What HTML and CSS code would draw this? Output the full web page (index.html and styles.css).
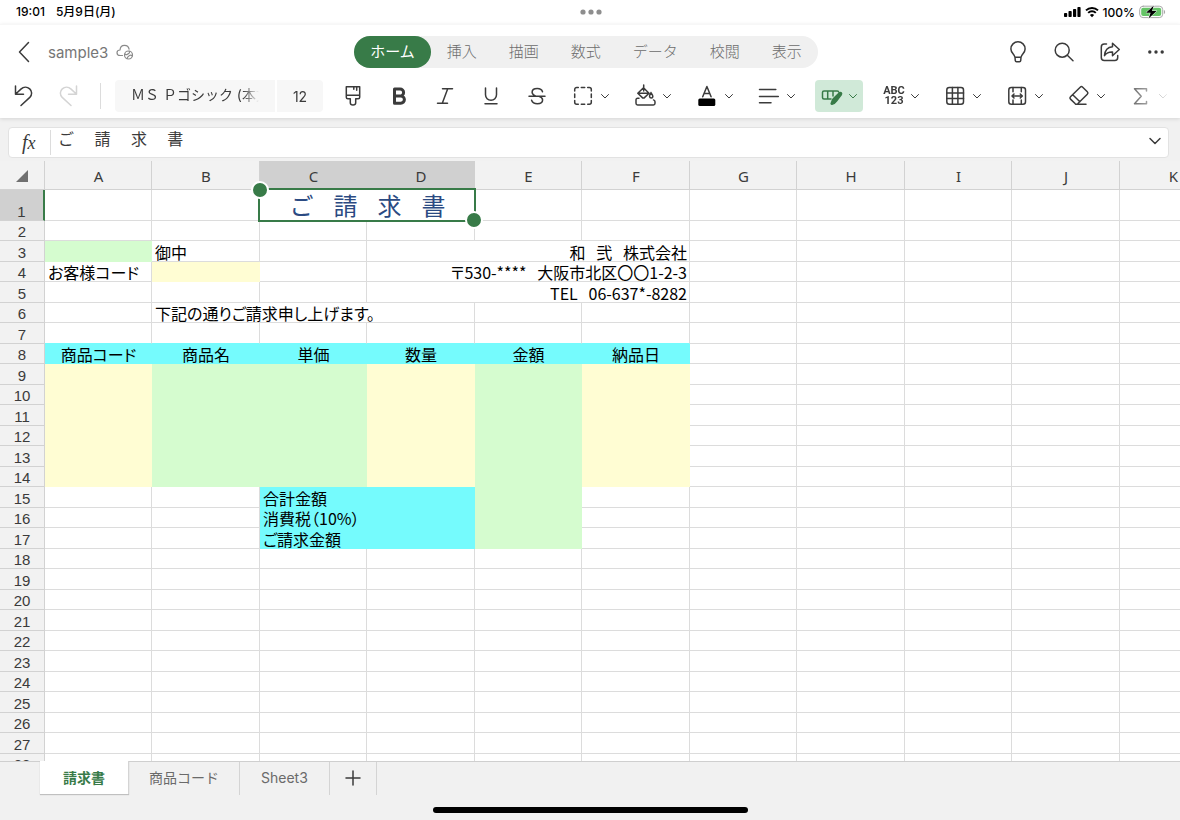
FILE: index.html
```html
<!DOCTYPE html>
<html lang="ja">
<head>
<meta charset="utf-8">
<meta name="viewport" content="width=device-width, initial-scale=1">
<title>sample3</title>
<link rel="stylesheet" href="styles.css">
</head>
<body>
<svg class="defs" aria-hidden="true">
  <symbol id="chev" viewBox="0 0 10 10"><path d="M1.5 3.5 5 7l3.5-3.5"/></symbol>
</svg>

<div class="status">
  <div class="status-left"><span>19:01</span><span>5月9日(月)</span></div>
  <svg class="status-dots" width="24" height="6" viewBox="0 0 24 6"><circle cx="4" cy="3" r="2.6"/><circle cx="12" cy="3" r="2.6"/><circle cx="20" cy="3" r="2.6"/></svg>
  <div class="status-right">
    <svg width="17" height="12" viewBox="0 0 17 12"><rect x="0" y="7" width="3.2" height="4" rx=".8"/><rect x="4.5" y="5" width="3.2" height="6" rx=".8"/><rect x="9" y="3" width="3.2" height="8" rx=".8"/><rect x="13.4" y="1" width="3.2" height="10" rx=".8"/></svg>
    <svg class="wifi" width="14" height="12" viewBox="0 0 14 12"><path d="M1 4.4a8.6 8.6 0 0 1 12 0M3.2 6.9a5.4 5.4 0 0 1 7.6 0"/><path class="solid" d="M7 11.2 4.9 9a3 3 0 0 1 4.2 0z"/></svg>
    <span>100%</span>
    <svg width="27" height="14" viewBox="0 0 27 14"><rect class="bat-line" x=".7" y="1.2" width="23" height="11.4" rx="3.4"/><path class="bat-cap" d="M24.9 5c1.6.3 1.6 3.6 0 4z"/><rect class="bat-fill" x="2.2" y="2.7" width="20" height="8.4" rx="2"/><path class="bolt" d="M14.8.6 7 7.700h4.600L9.600 13.400l8-7.300h-4.600z"/></svg>
  </div>
</div>

<header class="app">
  <div class="titlebar">
    <div class="doc">
      <button class="back" aria-label="戻る"><svg width="14" height="24" viewBox="0 0 14 24"><path d="M11.5 2.5 2.500 12l9 9.500"/></svg></button>
      <span class="doc-name">sample3</span>
      <svg class="cloud" width="18" height="18" viewBox="0 0 18 18"><path d="M6.500 12.500H4.200C2.300 12.500 1 11.300 1 9.700 1 8.100 2.300 7 4 7c.2-2.700 2-4.700 4.500-4.700 2.400 0 4.200 1.600 4.600 3.900"/><circle cx="12.500" cy="12" r="4"/><path d="M9.300 11.200c1.500 1.300 2-.2 3.200-.6s1.200-1.400.8-2.300M11.200 15.500c0-1.700 1.400-2 2.200-2.800s2.200-.3 2.800.2"/></svg>
    </div>
    <nav class="ribbon">
      <button class="rtab on">ホーム</button><button class="rtab">挿入</button><button class="rtab">描画</button><button class="rtab">数式</button><button class="rtab">データ</button><button class="rtab">校閲</button><button class="rtab">表示</button>
    </nav>
    <div class="actions">
      <button aria-label="ヒント"><svg width="24" height="24" viewBox="0 0 24 24"><path d="M9 17.300C8.500 14 4.900 12.800 4.900 8.900a7.100 7.100 0 0 1 14.200 0c0 3.900-3.600 5.100-4.100 8.400zM9 17.300l.3 3.400c.1.800.5 1.100 1.200 1.100h3c.7 0 1.100-.3 1.200-1.100l.3-3.400"/></svg></button>
      <button aria-label="検索"><svg width="24" height="24" viewBox="0 0 24 24"><circle cx="10.200" cy="10.200" r="7"/><path d="m15.300 15.300 5.700 5.500"/></svg></button>
      <button aria-label="共有"><svg width="24" height="24" viewBox="0 0 24 24"><path d="M8.500 4H6.300A3 3 0 0 0 3.300 7v10.500a3 3 0 0 0 3 3h10.400a3 3 0 0 0 3-3v-2"/><path d="M14.500 3.200 21.300 9.500l-6.800 6.200v-3.700c-3.600-.2-6 .9-8 3.600.4-5 3-8.500 8-8.900z"/></svg></button>
      <button aria-label="その他"><svg class="dots" width="24" height="24" viewBox="0 0 24 24"><circle cx="5.800" cy="12" r="1.700"/><circle cx="12" cy="12" r="1.700"/><circle cx="18.200" cy="12" r="1.700"/></svg></button>
    </div>
  </div>

  <div class="toolbar">
    <button class="tool" aria-label="元に戻す"><svg width="24" height="24" viewBox="0 0 24 24"><path d="M3.500 2v8.200h8M3.700 10l5.200-4.900c2.700-2.500 6.300-2.500 8.800-.2s2.600 6 .1 8.500L9 21.500"/></svg></button>
    <button class="tool off" aria-label="やり直し" disabled><svg width="24" height="24" viewBox="0 0 24 24"><path d="M18.500 2v8.200h-8M18.300 10l-5.200-4.900c-2.700-2.500-6.300-2.500-8.800-.2s-2.600 6-.1 8.500l8.800 8.100"/></svg></button>
    <span class="sep"></span>
    <div class="fontbox">
      <label class="field font-name"><input type="text" value="ＭＳ Ｐゴシック (本文)" aria-label="フォント"></label>
      <label class="field font-size"><input type="text" value="12" aria-label="フォント サイズ"></label>
    </div>
    <button class="tool" aria-label="書式のコピー"><svg width="24" height="24" viewBox="0 0 24 24"><path d="M5.300 2.700h13.400v10.600c0 1-.5 1.500-1.500 1.500h-2.500v4c0 3-5.400 3-5.400 0v-4H6.800c-1 0-1.500-.5-1.500-1.500zM5.300 11.200h13.400M12.800 2.700v2.500M15.700 2.700v3.600"/></svg></button>
    <button class="tool" aria-label="太字"><svg class="heavy" width="24" height="24" viewBox="0 0 24 24"><path d="M7.500 5h5.600a3.500 3.500 0 0 1 0 7H7.500zM7.500 12h6.300a3.600 3.600 0 0 1 0 7.200H7.500z"/></svg></button>
    <button class="tool" aria-label="斜体"><svg width="24" height="24" viewBox="0 0 24 24"><path d="M9.500 4.700h10M4.500 19.200h10M14.700 4.700 9.300 19.200"/></svg></button>
    <button class="tool" aria-label="下線"><svg width="24" height="24" viewBox="0 0 24 24"><path d="M6.500 4v6.800a5.500 5.500 0 0 0 11 0V4M6 19.800h12"/></svg></button>
    <button class="tool" aria-label="取り消し線"><svg width="24" height="24" viewBox="0 0 24 24"><path d="M17.500 7.800C16.900 5.800 15 4.600 12.300 4.600c-3 0-5.200 1.400-5.200 3.700 0 1.900 1.300 2.900 3.700 3.900M14 12.300c2.400.9 3.600 2 3.600 3.800 0 2.200-2.100 3.700-5.200 3.700-3 0-5.100-1.300-5.800-3.600M4 12.300h16"/></svg></button>
    <button class="tool drop" aria-label="罫線"><svg width="24" height="24" viewBox="0 0 24 24"><path d="M2.700 7V5.400a2 2 0 0 1 2-2h1.600M15.700 3.400h1.600a2 2 0 0 1 2 2V7M19.300 16.600v1.600a2 2 0 0 1-2 2h-1.600M6.300 20.200H4.700a2 2 0 0 1-2-2v-1.600M9.300 3.400h3.400M9.300 20.200h3.400M2.700 10.100v3.400M19.300 10.100v3.400"/></svg><svg class="chev" width="10" height="10"><use href="#chev"/></svg></button>
    <button class="tool drop" aria-label="塗りつぶし"><svg width="24" height="24" viewBox="0 0 24 24"><path d="M9.700 1v6M9.500 3.700 3.800 9.300l4.800 4.600h1.600l4.800-4.600zM4.500 9.300h9.700M17 8.600c2.700 3.700 2.100 5.300.3 5.300s-2.700-1.600-.3-5.300M5 14.300H3.600c-1 0-1.600.6-1.600 1.600v3.400c0 1 .6 1.600 1.600 1.600h15.800c1 0 1.600-.6 1.600-1.600v-1.500c0-1-.5-1.600-1.500-1.900"/></svg><svg class="chev" width="10" height="10"><use href="#chev"/></svg></button>
    <button class="tool drop" aria-label="フォントの色"><svg width="24" height="24" viewBox="0 0 24 24"><path d="M6.700 12.800 10.900 2.500l4.200 10.300M8 9.500h5.800"/><rect class="swatch" x="2.300" y="14.500" width="17" height="7.500" rx="1.500"/></svg><svg class="chev" width="10" height="10"><use href="#chev"/></svg></button>
    <button class="tool drop" aria-label="配置"><svg width="24" height="24" viewBox="0 0 24 24"><path d="M1.500 5.600h16.300M1.500 12.500h18.800M1.500 18.700h11.500"/></svg><svg class="chev" width="10" height="10"><use href="#chev"/></svg></button>
    <button class="tool drop active" aria-label="セルのスタイル"><svg width="24" height="24" viewBox="0 0 24 24"><path d="M11 15H4a1.500 1.500 0 0 1-1.500-1.500v-5A1.500 1.500 0 0 1 4 7h13.300c.8 0 1.300.4 1.300 1M7.700 7v8M13 7v5"/><path class="solid" d="M19.700 8.600c1.200-.6 2.400.6 1.700 1.900l-4.700 6.400c-1.200 1.800-2.600 3-4.700 3.300-.8.100-1-.4-.7-1 .8-1.600.8-3.300 2.200-4.600z"/></svg><svg class="chev" width="10" height="10"><use href="#chev"/></svg></button>
    <button class="tool drop" aria-label="表示形式"><span class="numfmt">ABC<br>123</span><svg class="chev" width="10" height="10"><use href="#chev"/></svg></button>
    <button class="tool drop" aria-label="テーブル"><svg width="24" height="24" viewBox="0 0 24 24"><rect x="2.800" y="3.500" width="16.700" height="16.700" rx="2.500"/><path d="M8.400 3.500v16.700M13.900 3.500v16.700M2.800 9h16.700M2.800 14.600h16.700"/></svg><svg class="chev" width="10" height="10"><use href="#chev"/></svg></button>
    <button class="tool drop" aria-label="セルの結合"><svg width="24" height="24" viewBox="0 0 24 24"><rect x="2.800" y="3.500" width="16.700" height="16.700" rx="2.500"/><path d="M7 3.500v4.200M15.300 3.500v4.200M7 20.200V16M15.300 20.200V16M6.200 12h9.900M8 10l-2 2 2 2M14.300 10l2 2-2 2"/></svg><svg class="chev" width="10" height="10"><use href="#chev"/></svg></button>
    <button class="tool drop" aria-label="クリア"><svg width="24" height="24" viewBox="0 0 24 24"><path d="M12.200 3.200c.8-.8 1.700-.8 2.500 0l4.600 4.500c.8.800.8 1.700 0 2.500L9.700 19.800c-.8.700-1.600.7-2.400 0l-4.800-4.700c-.8-.8-.8-1.600 0-2.400zM4.700 10.700l7.200 7M7.500 20.300H18"/></svg><svg class="chev" width="10" height="10"><use href="#chev"/></svg></button>
    <button class="tool drop" aria-label="オート SUM"><svg width="24" height="24" viewBox="0 0 24 24"><path d="M16.500 7V4.700H4.500l6.700 7.500-6.700 7.500h12v-2.300"/></svg><svg class="chev" width="10" height="10"><use href="#chev"/></svg></button>
  </div>
</header>

<div class="formula">
  <span class="fx"><i>f</i><i class="x">x</i></span>
  <input type="text" aria-label="数式バー" value="ご　&nbsp;請　&nbsp;求　&nbsp;書">
  <button aria-label="数式バーを展開"><svg width="14" height="14" viewBox="0 0 14 14"><path d="m2 4.500 5 5 5-5"/></svg></button>
</div>

<main class="sheet">
<table>
<colgroup><col class="c-head"><col class="n"><col class="w"><col class="n"><col class="w"><col class="n"><col class="w"><col class="n"><col class="w"><col class="n"><col class="w"><col class="n"></colgroup>
<thead>
<tr><th class="corner"><svg width="12" height="12" viewBox="0 0 12 12"><path d="M12 0v12H0z"/></svg></th><th>A</th><th>B</th><th class="sel">C</th><th class="sel">D</th><th>E</th><th>F</th><th>G</th><th>H</th><th>I</th><th>J</th><th>K</th></tr>
</thead>
<tbody>
<tr class="tall"><th class="sel">1</th><td></td><td></td><td colspan="2" class="title">ご&nbsp;&nbsp;&nbsp;請&nbsp;&nbsp;&nbsp;求&nbsp;&nbsp;&nbsp;書<span class="selection"></span></td><td></td><td></td><td></td><td></td><td></td><td></td><td></td></tr>
<tr><th>2</th><td></td><td></td><td></td><td></td><td></td><td></td><td></td><td></td><td></td><td></td><td></td></tr>
<tr><th>3</th><td class="g"></td><td>御中</td><td></td><td colspan="3" class="r">和&nbsp;&nbsp;&nbsp;弐&nbsp;&nbsp;&nbsp;株式会社</td><td></td><td></td><td></td><td></td><td></td></tr>
<tr><th>4</th><td>お客様コード</td><td class="y"></td><td></td><td colspan="3" class="r">〒530-****&nbsp;&nbsp; 大阪市北区〇〇1-2-3</td><td></td><td></td><td></td><td></td><td></td></tr>
<tr><th>5</th><td></td><td></td><td></td><td colspan="3" class="r">TEL&nbsp;&nbsp; 06-637*-8282</td><td></td><td></td><td></td><td></td><td></td></tr>
<tr><th>6</th><td></td><td colspan="3">下記の通りご請求申し上げます。</td><td></td><td></td><td></td><td></td><td></td><td></td><td></td></tr>
<tr class="before-band"><th>7</th><td></td><td></td><td></td><td></td><td></td><td></td><td></td><td></td><td></td><td></td><td></td></tr>
<tr class="band"><th>8</th><td class="b">商品コード</td><td class="b">商品名</td><td class="b">単価</td><td class="b">数量</td><td class="b">金額</td><td class="b">納品日</td><td></td><td></td><td></td><td></td><td></td></tr>
<tr><th>9</th><td class="y"></td><td class="g"></td><td class="g"></td><td class="y"></td><td class="g"></td><td class="y"></td><td></td><td></td><td></td><td></td><td></td></tr>
<tr><th>10</th><td class="y"></td><td class="g"></td><td class="g"></td><td class="y"></td><td class="g"></td><td class="y"></td><td></td><td></td><td></td><td></td><td></td></tr>
<tr><th>11</th><td class="y"></td><td class="g"></td><td class="g"></td><td class="y"></td><td class="g"></td><td class="y"></td><td></td><td></td><td></td><td></td><td></td></tr>
<tr><th>12</th><td class="y"></td><td class="g"></td><td class="g"></td><td class="y"></td><td class="g"></td><td class="y"></td><td></td><td></td><td></td><td></td><td></td></tr>
<tr><th>13</th><td class="y"></td><td class="g"></td><td class="g"></td><td class="y"></td><td class="g"></td><td class="y"></td><td></td><td></td><td></td><td></td><td></td></tr>
<tr><th>14</th><td class="y"></td><td class="g"></td><td class="g"></td><td class="y"></td><td class="g"></td><td class="y"></td><td></td><td></td><td></td><td></td><td></td></tr>
<tr><th>15</th><td></td><td></td><td class="b">合計金額</td><td class="b"></td><td class="g"></td><td></td><td></td><td></td><td></td><td></td><td></td></tr>
<tr><th>16</th><td></td><td></td><td class="b">消費税（10%）</td><td class="b"></td><td class="g"></td><td></td><td></td><td></td><td></td><td></td><td></td></tr>
<tr><th>17</th><td></td><td></td><td class="b">ご請求金額</td><td class="b"></td><td class="g"></td><td></td><td></td><td></td><td></td><td></td><td></td></tr>
<tr><th>18</th><td></td><td></td><td></td><td></td><td></td><td></td><td></td><td></td><td></td><td></td><td></td></tr>
<tr><th>19</th><td></td><td></td><td></td><td></td><td></td><td></td><td></td><td></td><td></td><td></td><td></td></tr>
<tr><th>20</th><td></td><td></td><td></td><td></td><td></td><td></td><td></td><td></td><td></td><td></td><td></td></tr>
<tr><th>21</th><td></td><td></td><td></td><td></td><td></td><td></td><td></td><td></td><td></td><td></td><td></td></tr>
<tr><th>22</th><td></td><td></td><td></td><td></td><td></td><td></td><td></td><td></td><td></td><td></td><td></td></tr>
<tr><th>23</th><td></td><td></td><td></td><td></td><td></td><td></td><td></td><td></td><td></td><td></td><td></td></tr>
<tr><th>24</th><td></td><td></td><td></td><td></td><td></td><td></td><td></td><td></td><td></td><td></td><td></td></tr>
<tr><th>25</th><td></td><td></td><td></td><td></td><td></td><td></td><td></td><td></td><td></td><td></td><td></td></tr>
<tr><th>26</th><td></td><td></td><td></td><td></td><td></td><td></td><td></td><td></td><td></td><td></td><td></td></tr>
<tr><th>27</th><td></td><td></td><td></td><td></td><td></td><td></td><td></td><td></td><td></td><td></td><td></td></tr>
<tr><th>28</th><td></td><td></td><td></td><td></td><td></td><td></td><td></td><td></td><td></td><td></td><td></td></tr>
</tbody>
</table>
</main>

<footer class="bottom">
  <nav class="tabs">
    <button class="tab on">請求書</button><button class="tab">商品コード</button><button class="tab latin">Sheet3</button><button class="tab add" aria-label="シートを追加"><svg width="16" height="16" viewBox="0 0 16 16"><path d="M8 1v14M1 8h14"/></svg></button>
  </nav>
  <div class="home"></div>
</footer>
</body>
</html>
```
FILE: styles.css
```css
* { box-sizing: border-box; }

body {
  margin: 0;
  height: 100vh;
  display: flex;
  flex-direction: column;
  overflow: hidden;
  background: #f1f1f1;
  color: #3b3b3b;
  font-family: Inter, "Noto Sans CJK JP", sans-serif;
}

button, input {
  margin: 0;
  padding: 0;
  border: 0;
  background: none;
  color: inherit;
  font: inherit;
}

svg { display: block; flex: none; fill: none; stroke: #3b3b3b; stroke-width: 1.5; stroke-linecap: round; stroke-linejoin: round; }
.defs { position: absolute; width: 0; height: 0; }

/* Status bar */
.status {
  display: grid;
  grid-template-columns: 1fr auto 1fr;
  align-items: center;
  height: 24px;
  padding: 0 14px 0 16px;
  background: #fff;
  color: #000;
  font-size: 12px;
  font-weight: 500;
}
.status svg { stroke: none; fill: #000; }
.status-left { display: flex; align-items: baseline; gap: 11px; line-height: 16px; }
.status .status-dots { fill: #8e8e8e; }
.status-right { display: flex; justify-content: flex-end; align-items: center; gap: 4px; }
.status .wifi { fill: none; stroke: #000; stroke-width: 2; stroke-linecap: butt; }
.wifi .solid { fill: #000; stroke: none; }
.bat-line { stroke: #a9a9a9; stroke-width: 1; fill: none; }
.bat-cap { fill: #a9a9a9; }
.bat-fill { fill: #65c466; }
.status .bolt { fill: #000; stroke: #fff; stroke-width: 1; paint-order: stroke; }

/* Header */
.app {
  padding-bottom: 6px;
  border-top: 1px solid #f7f7f7;
  background: #fff;
  box-shadow: 0 1px 4px rgba(0, 0, 0, .12);
}
.titlebar {
  display: grid;
  grid-template-columns: 1fr auto 1fr;
  align-items: center;
  height: 54px;
  margin-bottom: 1px;
  padding: 0 12px 0 4px;
}
.doc { display: flex; align-items: center; gap: 8px; padding-left: 13px; }
.doc-name { color: #767676; font-size: 15px; margin-left: 9px; }
.cloud { stroke: #8a8a8a; stroke-width: 1.2; }
.ribbon { display: flex; border-radius: 16px; background: #f0f0f0; }
.rtab {
  height: 32px;
  padding: 0 16px;
  border-radius: 16px;
  color: #6c6c6c;
  font-size: 15px;
  font-weight: 300;
  line-height: 30px;
  white-space: nowrap;
}
.rtab.on { background: #387b48; color: #fff; font-weight: 400; }
.actions { display: flex; justify-content: flex-end; gap: 22px; }
.dots { fill: #3b3b3b; stroke: none; }

/* Toolbar */
.toolbar {
  display: flex;
  align-items: center;
  gap: 14px;
  height: 32px;
  padding-left: 8px;
  overflow: hidden;
  mask-image: linear-gradient(to right, #000 calc(100% - 62px), transparent calc(100% - 6px));
}
.tool { display: flex; flex: none; align-items: center; justify-content: center; width: 32px; height: 32px; border-radius: 4px; }
.tool.off svg { stroke: #d4d4d4; }
.tool.drop { width: 48px; gap: 4px; }
.tool.active { background: #d0e9d8; }
.tool.active svg { stroke: #387b48; }
.tool .solid { fill: #387b48; }
.tool .chev { stroke-width: 1; }
.heavy path { stroke-width: 3; }
.tool .swatch { fill: #000; stroke: none; }
.sep { flex: none; width: 1px; height: 26px; background: #dcdcdc; }
.numfmt { width: 24px; font: 700 11px/10px Roboto, sans-serif; text-align: center; }
.fontbox { display: flex; flex: none; gap: 2px; }
.field { display: flex; height: 32px; background: #f7f7f7; font-size: 14px; }
.field input { width: 100%; min-width: 0; }
.font-name { width: 160px; padding: 0 16px 4px; border-radius: 4px 0 0 4px; }
.font-name input { mask-image: linear-gradient(to right, #000 calc(100% - 16px), transparent); }
.font-size { width: 46px; border-radius: 0 4px 4px 0; }
.font-size input { text-align: center; }

/* Formula bar */
.formula {
  display: flex;
  align-items: center;
  height: 31px;
  margin: 9px 11px 3px 8px;
  border: 1px solid #e2e2e2;
  border-radius: 4px;
  background: #fff;
}
.fx { width: 42px; height: 25px; padding-left: 13px; border-right: 1px solid #dcdcdc; font: 20px/25px "Liberation Serif", serif; }
.fx .x { font-size: 18px; }
.formula input { flex: 1; min-width: 0; height: 29px; padding: 0 7px 10px; font-size: 16px; font-family: "Liberation Sans", "Noto Sans CJK JP", sans-serif; }
.formula button { padding: 0 6px 3px; }

/* Grid */
.sheet { flex: 1; min-height: 0; overflow: hidden; background: #fff; }
table { width: 1227px; table-layout: fixed; border-spacing: 0; }
.c-head { width: 45px; }
.n { width: 107px; }
.w { width: 108px; }
th, td { padding: 0 2px; border-right: 1px solid #dcdcdc; border-bottom: 1px solid #dcdcdc; white-space: nowrap; }
th { background: #f2f2f2; border-color: #d2d2d2; font-weight: 400; }
thead th { height: 29px; padding: 1px 0 0 1px; font: 15px/20px "Noto Sans", sans-serif; }
thead .sel { border-right-color: #d0d0d0; background: #d0d0d0; }
.corner svg { margin-left: 15px; fill: #707070; stroke: none; }
tbody tr { height: 20px; }
tbody tr:nth-child(odd) { height: 21px; }
tbody .tall:nth-child(odd) { height: 31px; }
tbody th { font: 15px/16px "Liberation Sans", sans-serif; vertical-align: bottom; }
tbody th.sel { border-right: 2px solid #387b48; background: #d0d0d0; }
td {
  padding-left: 3px;
  color: #000;
  font: 16px/17px "Noto Sans CJK JP", sans-serif;
  font-feature-settings: "palt";
  vertical-align: bottom;
}
.r { text-align: right; }
.g { border-color: #d5fccf; background: #d5fccf; }
.y { border-color: #fffdd3; background: #fffdd3; }
.b { border-color: #75fbfd; background: #75fbfd; }
.band .b { text-align: center; }
.before-band td:nth-child(-n+7) { border-bottom-color: #75fbfd; }
.title {
  position: relative;
  color: #2b4a82;
  font: 24px/26px "Liberation Sans", "Noto Sans CJK JP", sans-serif;
  font-feature-settings: normal;
  text-align: center;
}
.selection { position: absolute; inset: -2px; border: 2px solid #387b48; }
.selection::before, .selection::after {
  content: "";
  position: absolute;
  width: 14px;
  height: 14px;
  border: 2px solid #fff;
  border-radius: 50%;
  background: #387b48;
}
.selection::before { top: -9px; left: -9px; }
.selection::after { right: -9px; bottom: -9px; }

/* Sheet tabs */
.bottom { height: 59px; border-top: 1px solid #cfcfcf; background: #f1f1f1; }
.tabs { display: flex; padding-left: 40px; }
.tab {
  height: 33px;
  padding: 0 20px 4px;
  border-right: 1px solid #d4d4d4;
  color: #6a6a6a;
  font-size: 14px;
}
.tab.latin { padding: 0 21px 2px; }
.tab.on { margin-top: -1px; padding: 0 23px 2px; background: #fff; box-shadow: 0 1px 1px rgba(0, 0, 0, .2); color: #387b48; font-weight: 700; }
.tab.add { padding: 0 15px 2px; }
.home { width: 315px; height: 6px; margin: 12px auto 0; border-radius: 3px; background: #000; }
```
